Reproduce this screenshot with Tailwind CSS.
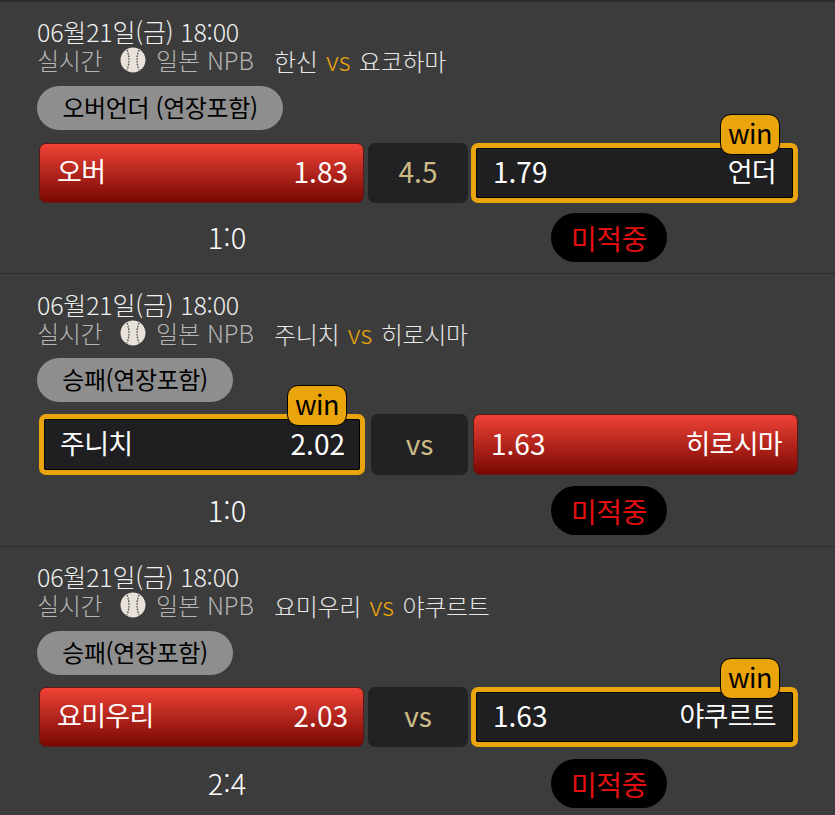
<!DOCTYPE html>
<html lang="ko">
<head>
<meta charset="utf-8">
<script src="https://cdn.jsdelivr.net/npm/@tailwindcss/browser@4"></script>
</head>
<body class="m-0 bg-[#3c3c3c] font-['Noto_Sans_CJK_KR','Noto_Sans',sans-serif] font-light text-white overflow-hidden">
<main class="w-[835px] h-[815px] overflow-hidden">

<!-- Match 1 -->
<section class="h-[273px] border-t-2 border-[#2c2c2c] px-[37px] pt-[15px]">
  <div class="text-[25px] leading-[28px] tracking-[-0.2px] text-[#f0f0f0]">06월21일(금) 18:00</div>
  <div class="flex items-center mt-[1px] h-[28px] text-[24px] leading-[28px] tracking-[-0.3px] text-[#b5b5b5]">
    <span class="w-[83px]">실시간</span>
    <svg class="w-[26px] h-[26px]" viewBox="0 0 26 26"><circle cx="13" cy="13" r="12.5" fill="#e8e2da"/><path d="M7 3Q11 13 7 23M19 3Q15 13 19 23" fill="none" stroke="#555" stroke-width="1.4" stroke-dasharray="1.6 1.2"/></svg>
    <span class="ml-[10px] w-[119px] tracking-normal">일본 NPB</span>
    <span class="text-[#e8e8e8] whitespace-nowrap -ml-px">한신 <span class="mx-[2px] text-[26px] tracking-normal text-[#eaa50c]">vs</span> 요코하마</span>
  </div>
  <div class="mt-[12px] w-[246px] h-[44px] pb-[2px] rounded-full bg-[#8e8e8e] text-black font-normal text-[24px] leading-[28px] tracking-[-0.4px] flex items-center justify-center">오버언더 (연장포함)</div>
  <div class="flex mt-[13px] h-[60px] ml-[2px] w-[759px] text-[27px] leading-[36px] font-normal tracking-[-0.7px]">
    <div class="w-[325px] pb-[4px] rounded-[7px] border border-[#5c1a16] bg-gradient-to-b from-[#f04236] to-[#7a0603] flex items-center justify-between pl-[17px] pr-[15px]"><span>오버</span><span class="text-[28px] tracking-normal">1.83</span></div>
    <div class="w-[100px] pb-[4px] ml-[4px] rounded-[7px] bg-[#222224] text-[#cdbb85] text-[28px] tracking-normal flex items-center justify-center">4.5</div>
    <div class="relative w-[327px] pb-[4px] ml-[3px] rounded-[7px] border-[5px] border-[#eaa50c] bg-[#1f1f21] outline-1 outline-black outline-offset-[-6px] flex items-center justify-between px-[17px]"><span class="text-[28px] tracking-normal">1.79</span><span>언더</span>
      <span class="absolute right-[13px] top-[-34px] w-[60px] h-[41px] pb-[4px] rounded-[11px] bg-[#eaa50c] border border-black text-black text-[27px] tracking-[-0.5px] flex items-center justify-center">win</span>
    </div>
  </div>
  <div class="flex items-center mt-[10px] ml-[2px] w-[759px]">
    <div class="w-[376px] pb-[4px] text-center text-[29px] leading-[36px]">1:0</div>
    <div class="ml-[136px] w-[116px] h-[49px] rounded-full bg-black text-[#e21010] text-[28px] leading-[36px] font-normal tracking-[-0.5px] flex items-center justify-center">미적중</div>
  </div>
</section>

<!-- Match 2 -->
<section class="h-[273px] border-t border-[#2c2c2c] px-[37px] pt-[16px]">
  <div class="text-[25px] leading-[28px] tracking-[-0.2px] text-[#f0f0f0]">06월21일(금) 18:00</div>
  <div class="flex items-center mt-[1px] h-[28px] text-[24px] leading-[28px] tracking-[-0.3px] text-[#b5b5b5]">
    <span class="w-[83px]">실시간</span>
    <svg class="w-[26px] h-[26px]" viewBox="0 0 26 26"><circle cx="13" cy="13" r="12.5" fill="#e8e2da"/><path d="M7 3Q11 13 7 23M19 3Q15 13 19 23" fill="none" stroke="#555" stroke-width="1.4" stroke-dasharray="1.6 1.2"/></svg>
    <span class="ml-[10px] w-[119px] tracking-normal">일본 NPB</span>
    <span class="text-[#e8e8e8] whitespace-nowrap -ml-px">주니치 <span class="mx-[2px] text-[26px] tracking-normal text-[#eaa50c]">vs</span> 히로시마</span>
  </div>
  <div class="mt-[11px] w-[196px] h-[44px] pb-[2px] rounded-full bg-[#8e8e8e] text-black font-normal text-[24px] leading-[28px] tracking-[-0.4px] flex items-center justify-center">승패(연장포함)</div>
  <div class="flex mt-[12px] h-[61px] ml-[2px] w-[759px] text-[27px] leading-[36px] font-normal tracking-[-0.7px]">
    <div class="relative w-[326px] pb-[4px] rounded-[7px] border-[5px] border-[#eaa50c] bg-[#1f1f21] outline-1 outline-black outline-offset-[-6px] flex items-center justify-between pl-[16px] pr-[15px]"><span>주니치</span><span class="text-[28px] tracking-normal">2.02</span>
      <span class="absolute right-[13px] top-[-34px] w-[60px] h-[41px] pb-[4px] rounded-[11px] bg-[#eaa50c] border border-black text-black text-[27px] tracking-[-0.5px] flex items-center justify-center">win</span>
    </div>
    <div class="w-[97px] pb-[4px] ml-[6px] rounded-[7px] bg-[#222224] text-[#cdbb85] text-[28px] tracking-normal flex items-center justify-center">vs</div>
    <div class="w-[325px] pb-[4px] ml-[5px] rounded-[7px] border border-[#5c1a16] bg-gradient-to-b from-[#f04236] to-[#7a0603] flex items-center justify-between pl-[17px] pr-[15px]"><span class="text-[28px] tracking-normal">1.63</span><span>히로시마</span></div>
  </div>
  <div class="flex items-center mt-[11px] ml-[2px] w-[759px]">
    <div class="w-[376px] pb-[4px] text-center text-[29px] leading-[36px]">1:0</div>
    <div class="ml-[136px] w-[116px] h-[49px] rounded-full bg-black text-[#e21010] text-[28px] leading-[36px] font-normal tracking-[-0.5px] flex items-center justify-center">미적중</div>
  </div>
</section>

<!-- Match 3 -->
<section class="h-[269px] border-t border-[#2c2c2c] px-[37px] pt-[15px]">
  <div class="text-[25px] leading-[28px] tracking-[-0.2px] text-[#f0f0f0]">06월21일(금) 18:00</div>
  <div class="flex items-center mt-[1px] h-[28px] text-[24px] leading-[28px] tracking-[-0.3px] text-[#b5b5b5]">
    <span class="w-[83px]">실시간</span>
    <svg class="w-[26px] h-[26px]" viewBox="0 0 26 26"><circle cx="13" cy="13" r="12.5" fill="#e8e2da"/><path d="M7 3Q11 13 7 23M19 3Q15 13 19 23" fill="none" stroke="#555" stroke-width="1.4" stroke-dasharray="1.6 1.2"/></svg>
    <span class="ml-[10px] w-[119px] tracking-normal">일본 NPB</span>
    <span class="text-[#e8e8e8] whitespace-nowrap -ml-px">요미우리 <span class="mx-[2px] text-[26px] tracking-normal text-[#eaa50c]">vs</span> 야쿠르트</span>
  </div>
  <div class="mt-[12px] w-[196px] h-[44px] pb-[2px] rounded-full bg-[#8e8e8e] text-black font-normal text-[24px] leading-[28px] tracking-[-0.4px] flex items-center justify-center">승패(연장포함)</div>
  <div class="flex mt-[12px] h-[60px] ml-[2px] w-[759px] text-[27px] leading-[36px] font-normal tracking-[-0.7px]">
    <div class="w-[325px] pb-[4px] rounded-[7px] border border-[#5c1a16] bg-gradient-to-b from-[#f04236] to-[#7a0603] flex items-center justify-between pl-[17px] pr-[15px]"><span>요미우리</span><span class="text-[28px] tracking-normal">2.03</span></div>
    <div class="w-[100px] pb-[4px] ml-[4px] rounded-[7px] bg-[#222224] text-[#cdbb85] text-[28px] tracking-normal flex items-center justify-center">vs</div>
    <div class="relative w-[327px] pb-[4px] ml-[3px] rounded-[7px] border-[5px] border-[#eaa50c] bg-[#1f1f21] outline-1 outline-black outline-offset-[-6px] flex items-center justify-between px-[17px]"><span class="text-[28px] tracking-normal">1.63</span><span>야쿠르트</span>
      <span class="absolute right-[13px] top-[-34px] w-[60px] h-[41px] pb-[4px] rounded-[11px] bg-[#eaa50c] border border-black text-black text-[27px] tracking-[-0.5px] flex items-center justify-center">win</span>
    </div>
  </div>
  <div class="flex items-center mt-[12px] ml-[2px] w-[759px]">
    <div class="w-[376px] pb-[4px] text-center text-[29px] leading-[36px]">2:4</div>
    <div class="ml-[136px] w-[116px] h-[49px] rounded-full bg-black text-[#e21010] text-[28px] leading-[36px] font-normal tracking-[-0.5px] flex items-center justify-center">미적중</div>
  </div>
</section>
</main>
</body>
</html>
